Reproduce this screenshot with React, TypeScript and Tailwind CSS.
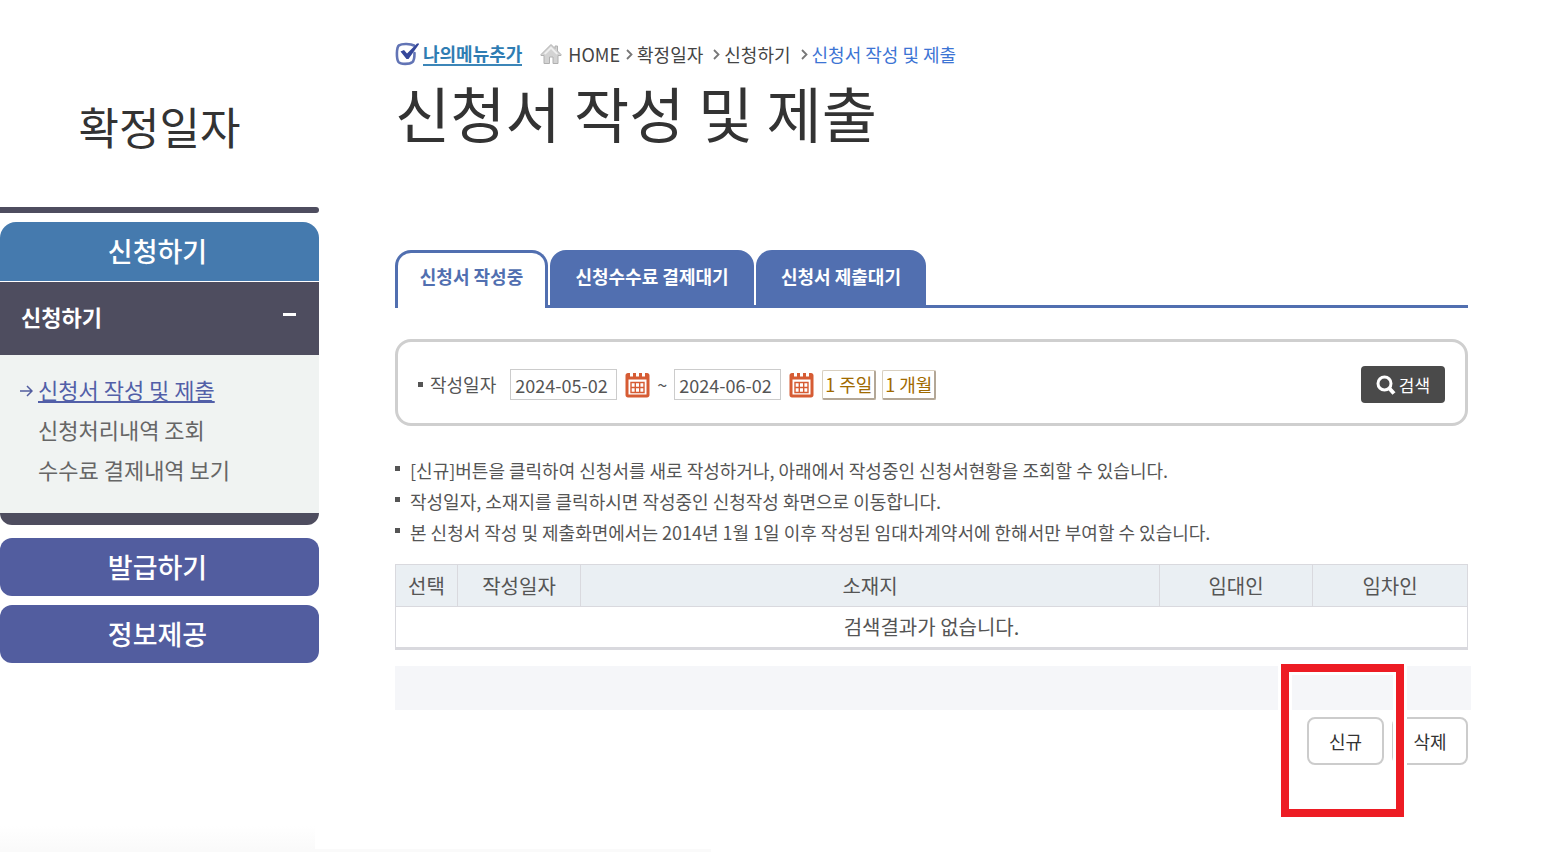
import React, { useState } from 'react';

const FONT = "font-['Noto_Sans_CJK_KR',sans-serif]";

const subMenus = ['신청서 작성 및 제출', '신청처리내역 조회', '수수료 결제내역 보기'];

const notices = [
  '[신규]버튼을 클릭하여 신청서를 새로 작성하거나, 아래에서 작성중인 신청서현황을 조회할 수 있습니다.',
  '작성일자, 소재지를 클릭하시면 작성중인 신청작성 화면으로 이동합니다.',
  '본 신청서 작성 및 제출화면에서는 2014년 1월 1일 이후 작성된 임대차계약서에 한해서만 부여할 수 있습니다.',
];

const columns = [
  { label: '선택', width: 'w-[62px]' },
  { label: '작성일자', width: 'w-[123px]' },
  { label: '소재지', width: '' },
  { label: '임대인', width: 'w-[153px]' },
  { label: '임차인', width: 'w-[155px]' },
];

const CheckIcon = () => (
  <svg width="24" height="24" viewBox="0 0 24 24" fill="none" aria-hidden="true">
    <path
      d="M19 3.500C16 1.800 7 1.300 4 3.300C1.300 5.500 1.300 17 3.500 20C5.500 22.500 14.500 22.500 17.500 20C19.200 18.500 19.500 15 19.500 11"
      stroke="#6274b5"
      strokeWidth="2.600"
      strokeLinecap="round"
    />
    <path d="M5.500 9.500L9 8L12 11.500L22 1.500H24.500L13.500 17H11.500Z" fill="#35479a" />
  </svg>
);

const HomeIcon = () => (
  <svg width="22" height="22" viewBox="0 0 22 22" aria-hidden="true">
    <path
      d="M11 1.500L15 5.500V3H17.500V8L21 11.500V12.500H18V20.500H13V14H9.500V20.500H4V12.500H1V11.500Z"
      fill="#d3d3d3"
      stroke="#b0b0b0"
      strokeLinejoin="round"
    />
    <path d="M11 3.500L4 10.500L5.500 11.500L11 6L16.500 11.500L18 10.500Z" fill="#f0f0f0" />
  </svg>
);

const Chevron = () => (
  <svg width="7" height="12" viewBox="0 0 7 12" fill="none" aria-hidden="true">
    <path d="M1 2L5.500 6.500L1 11" stroke="#777" strokeWidth="1.800" />
  </svg>
);

const CalendarIcon = () => (
  <svg width="25" height="26" viewBox="0 0 25 26" fill="none" aria-hidden="true">
    <path
      d="M3 1H5V4.500H8V1H11V4.500H14V1H17V4.500H20V1H22C23.500 1 24.500 2 24.500 3.500V23C24.500 24.500 23.500 25.500 22 25.500H3C1.500 25.500 0.500 24.500 0.500 23V3.500C0.500 2 1.500 1 3 1ZM3.500 7.500V22.500H21.500V7.500Z"
      fill="#d65c34"
      fillRule="evenodd"
    />
    <path
      d="M6 10.500H19V20.500H6ZM6 15.500H19M10.300 10.500V20.500M14.700 10.500V20.500"
      stroke="#d65c34"
      strokeWidth="1.400"
    />
  </svg>
);

const SearchIcon = () => (
  <svg width="20" height="20" viewBox="0 0 20 20" fill="none" aria-hidden="true">
    <circle cx="8.500" cy="8.500" r="6.500" stroke="#fff" strokeWidth="3" />
    <path d="M13 13L18 18.500" stroke="#fff" strokeWidth="4" />
  </svg>
);

const Sidebar = () => (
  <aside className="w-[319px] shrink-0 text-center">
    <h2 className="pt-24 text-[44px] leading-[60px] text-[#333]">확정일자</h2>
    <div className="mt-[51px] h-[6px] rounded-r-sm bg-[#4e4d5f]" />
    <nav className="mt-[9px] text-white">
      <a
        href="#apply"
        className="block h-[59px] rounded-t-2xl bg-[#457aae] pr-1 text-[27px] leading-[58px] font-medium"
      >
        신청하기
      </a>
      <button
        type="button"
        className="mt-px flex h-[73px] w-full items-center justify-between bg-[#4e4d5f] pr-[23px] pb-1 pl-[21px] text-[22px] font-bold"
      >
        신청하기
        <span className="mb-1 h-[3px] w-[13px] bg-white" />
      </button>
      <ul className="h-[158px] bg-[#f0f3f2] pt-[14px] text-left text-[22px] leading-[40px] text-[#666]">
        {subMenus.map((menu, i) => (
          <li key={menu} className="flex items-center pl-5">
            <span className="flex w-[18px] items-center pt-1">
              {i === 0 && (
                <svg width="13" height="12" viewBox="0 0 13 12" fill="none" aria-hidden="true">
                  <path d="M0 6H12M7 1L12 6L7 11" stroke="#525d9f" strokeWidth="1.500" />
                </svg>
              )}
            </span>
            <a href="#menu" className={i === 0 ? 'text-[#525fa8] underline underline-offset-2' : ''}>
              {menu}
            </a>
          </li>
        ))}
      </ul>
      <div className="h-[12px] rounded-b-2xl bg-[#4e4d5f]" />
      <a
        href="#issue"
        className="mt-[13px] block h-[58px] rounded-xl bg-[#525d9f] pr-1 text-[27px] leading-[58px] font-medium"
      >
        발급하기
      </a>
      <a
        href="#info"
        className="mt-[9px] block h-[58px] rounded-xl bg-[#525d9f] pr-1 text-[27px] leading-[58px] font-medium"
      >
        정보제공
      </a>
    </nav>
  </aside>
);

const Breadcrumb = () => (
  <nav className="flex h-6 items-center text-[18px] leading-6 text-[#444]">
    <CheckIcon />
    <a href="#my" className="ml-1 border-b-2 border-[#3c86b8] leading-[22px] font-bold text-[#2f7db3]">
      나의메뉴추가
    </a>
    <span className="ml-[18px]">
      <HomeIcon />
    </span>
    <a href="#home" className="mr-[6px] ml-[6px]">
      HOME
    </a>
    <Chevron />
    <a href="#date" className="mr-[10px] ml-1">
      확정일자
    </a>
    <Chevron />
    <a href="#apply" className="mr-[10px] ml-1">
      신청하기
    </a>
    <Chevron />
    <a href="#submit" className="ml-1 text-[#3c74d4]">
      신청서 작성 및 제출
    </a>
  </nav>
);

const Tabs = () => (
  <div className="flex h-[58px] text-[18px] font-bold">
    <button
      type="button"
      className="w-[153px] rounded-t-2xl border-[3px] border-b-0 border-[#516fb0] pb-2 text-[#516fb0]"
    >
      신청서 작성중
    </button>
    <div className="flex flex-1 gap-[2px] border-b-[3px] border-[#516fb0] pl-[2px] text-white">
      <button type="button" className="w-[204px] rounded-t-2xl bg-[#516fb0] pb-[2px]">
        신청수수료 결제대기
      </button>
      <button type="button" className="w-[170px] rounded-t-2xl bg-[#516fb0] pb-[2px]">
        신청서 제출대기
      </button>
    </div>
  </div>
);

const periodClass =
  'h-[30px] w-[54px] rounded-xs border border-r-2 border-b-2 border-[#d8cfc0] border-r-[#b3a797] border-b-[#b3a797] bg-white text-[18px] leading-[26px] whitespace-nowrap text-[#a06a00]';

const dateClass = 'h-[31px] w-[107px] border border-[#ccc] px-1 text-[18px] text-[#555]';

const SearchForm = () => {
  const [from, setFrom] = useState('2024-05-02');
  const [to, setTo] = useState('2024-06-02');

  return (
    <form
      className="mt-[31px] flex h-[87px] items-center rounded-2xl border-[3px] border-[#cfcfcf] px-5 pt-1 text-[18px] text-[#555]"
      onSubmit={(e) => e.preventDefault()}
    >
      <span className="mr-[7px] size-[5px] bg-[#555]" />
      <label htmlFor="from" className="mr-[14px]">
        작성일자
      </label>
      <input id="from" type="text" className={dateClass} value={from} onChange={(e) => setFrom(e.target.value)} />
      <button type="button" aria-label="시작일 선택" className="ml-2">
        <CalendarIcon />
      </button>
      <label htmlFor="to" className="w-6 text-center">
        ~
      </label>
      <input id="to" type="text" className={dateClass} value={to} onChange={(e) => setTo(e.target.value)} />
      <button type="button" aria-label="종료일 선택" className="mr-2 ml-2">
        <CalendarIcon />
      </button>
      <button type="button" className={periodClass}>
        1 주일
      </button>
      <button type="button" className={`ml-[6px] ${periodClass}`}>
        1 개월
      </button>
      <button
        type="submit"
        className="ml-auto flex h-[37px] w-[84px] items-center justify-center gap-[3px] rounded-sm bg-[#4a4a4a] text-[17px] text-white"
      >
        <SearchIcon />
        검색
      </button>
    </form>
  );
};

const ResultTable = () => (
  <table className="mt-4 w-full table-fixed border-collapse border border-b-[3px] border-[#d9d9de] text-center text-[20px] text-[#555]">
    <thead>
      <tr className="h-[42px] bg-[#eaeff3]">
        {columns.map((col) => (
          <th key={col.label} className={`border border-[#d9d9de] font-normal ${col.width}`}>
            {col.label}
          </th>
        ))}
      </tr>
    </thead>
    <tbody>
      <tr className="h-[42px]">
        <td colSpan={5}>검색결과가 없습니다.</td>
      </tr>
    </tbody>
  </table>
);

const Actions = () => (
  <div className="relative mt-4">
    <div className="-mr-[3px] h-11 bg-[#f5f6f9]" />
    <div className="mt-[7px] flex justify-end gap-2 text-[18px] text-[#333]">
      <button type="button" className="h-12 w-[77px] rounded-lg border-2 border-[#ccc] bg-white">
        신규
      </button>
      <button type="button" className="h-12 w-[76px] rounded-lg border-2 border-[#ccc] bg-white">
        삭제
      </button>
    </div>
    {/* highlight around the 신규 button */}
    <div className="pointer-events-none absolute -top-[2px] right-[64px] h-[153px] w-[123px] border-8 border-[#ed1c24] shadow-[-3px_0_0_#fff,3px_0_0_#fff,inset_0_0_0_3px_#fff]" />
  </div>
);

const App = () => {
  return (
    <div className={`flex min-h-screen flex-col bg-white ${FONT}`}>
      <div className="flex">
        <Sidebar />
        <main className="mr-[77px] ml-[76px] min-w-0 flex-1 pt-[42px]">
          <Breadcrumb />
          <h1 className="mt-[6px] text-[60px] leading-[80px] text-[#333]">신청서 작성 및 제출</h1>
          <div className="mt-[98px]">
            <Tabs />
          </div>
          <SearchForm />
          <ul className="mt-[29px] text-[18px] leading-[31px] text-[#555]">
            {notices.map((notice) => (
              <li key={notice} className="flex items-center">
                <span className="mr-[10px] mb-1 size-[5px] shrink-0 bg-[#555]" />
                {notice}
              </li>
            ))}
          </ul>
          <ResultTable />
          <Actions />
        </main>
      </div>
      <footer className="mt-auto w-[46%] border-b-[3px] border-[#fafafa]">
        <div className="h-[23px] w-[315px] bg-linear-to-b from-white to-[#fafafa]" />
      </footer>
    </div>
  );
};

export default App;
